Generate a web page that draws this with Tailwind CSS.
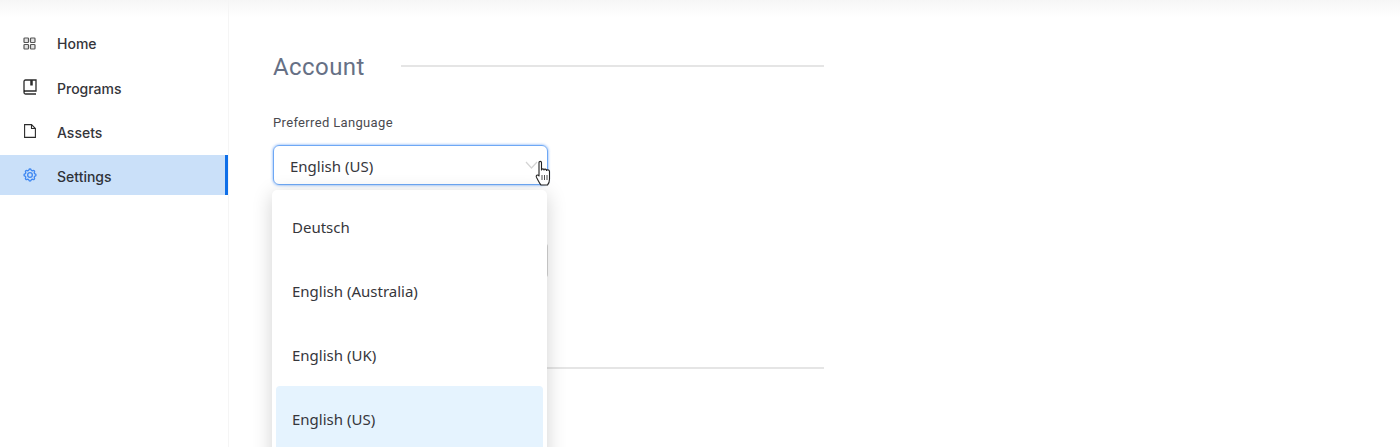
<!DOCTYPE html>
<html>
<head>
<meta charset="utf-8">
<script src="https://cdn.jsdelivr.net/npm/@tailwindcss/browser@4"></script>
</head>
<body class="bg-white overflow-hidden font-['Inter',sans-serif]">
<div class="relative w-[1400px] h-[447px] overflow-hidden flex flex-col">
  <div class="absolute top-0 left-0 right-0 h-[18px] bg-gradient-to-b from-[#f6f6f6] to-white"></div>
  <div class="flex flex-1 relative">
    <aside class="w-[229px] shrink-0 pt-[23px] border-r border-[#f5f5f5] flex flex-col gap-[4px]">
      <a class="h-[40px] flex items-center pl-[23px] gap-[21px] text-[14px] font-medium text-[#35353a]">
        <svg class="w-[13px] h-[13px]" viewBox="0 0 13 13" fill="#e4e4e4" stroke="#555" stroke-width="1.200"><rect x="1" y="1" width="4.500" height="4.500" rx="0.800"/><rect x="7.500" y="1" width="4.500" height="4.500" rx="0.800"/><rect x="1" y="7.500" width="4.500" height="4.500" rx="0.800"/><rect x="7.500" y="7.500" width="4.500" height="4.500" rx="0.800"/></svg>
        <span>Home</span></a>
      <a class="h-[40px] flex items-center pl-[23px] gap-[20px] text-[14px] font-medium text-[#35353a]">
        <svg class="w-[14px] h-[16px]" viewBox="0 0 14 16" fill="none" stroke="#2b2b2b" stroke-width="1.300"><path d="M1 13V2.500A1.500 1.500 0 0 1 2.500 1H13V12H2.500A1.500 1.500 0 0 0 1 13.500A1.500 1.500 0 0 0 2.500 15H13"/><path d="M8.500 1V6.500" stroke-width="2.500"/></svg>
        <span class="pt-[2px]">Programs</span></a>
      <a class="h-[40px] flex items-center pl-[24px] gap-[21px] text-[14px] font-medium text-[#35353a]">
        <svg class="w-[12px] h-[14px]" viewBox="0 0 12 14" fill="none" stroke="#2b2b2b" stroke-width="1.100"><path d="M0.600 0.600H7.500L11.400 4.500V13.400H0.600Z"/><path d="M7.500 0.600V4.500H11.400"/></svg>
        <span class="pt-[2px]">Assets</span></a>
      <a class="h-[40px] flex items-center pl-[22px] gap-[19px] text-[14px] font-medium text-[#2f3238] bg-[#cae0f9] border-r-[3px] border-[#0f6fe8]">
        <svg class="w-[16px] h-[16px]" viewBox="0 0 24 24" fill="none" stroke="#3f88f2" stroke-width="2" stroke-linecap="round" stroke-linejoin="round"><path d="M10.325 4.317c.426-1.756 2.924-1.756 3.350 0a1.724 1.724 0 0 0 2.573 1.066c1.543-.940 3.310.826 2.370 2.370a1.724 1.724 0 0 0 1.065 2.572c1.756.426 1.756 2.924 0 3.350a1.724 1.724 0 0 0-1.066 2.573c.940 1.543-.826 3.310-2.370 2.370a1.724 1.724 0 0 0-2.572 1.065c-.426 1.756-2.924 1.756-3.350 0a1.724 1.724 0 0 0-2.573-1.066c-1.543.940-3.310-.826-2.370-2.370a1.724 1.724 0 0 0-1.065-2.572c-1.756-.426-1.756-2.924 0-3.350a1.724 1.724 0 0 0 1.066-2.573c-.940-1.543.826-3.310 2.370-2.370 1 .608 2.296.070 2.572-1.065z"/><circle cx="12" cy="12" r="3.500"/></svg>
        <span class="pt-[2px]">Settings</span></a>
    </aside>
    <main class="w-[595px] pl-[44px] pr-0 pt-[52px]">
      <div class="flex items-start gap-[36px] h-[30px]">
        <h2 class="text-[24px] leading-[30px] text-[#667085] font-['Roboto',sans-serif] tracking-[0.42px]">Account</h2>
        <div class="flex-1 h-[2px] mt-[13px] bg-[#e5e5e5]"></div>
      </div>
      <label class="block mt-[32px] text-[13px] leading-[18px] text-[#4a4a4f] font-['Roboto',sans-serif] tracking-[0.34px]">Preferred Language</label>
      <div class="mt-[13px] w-[275px] h-[40px] rounded-[6px] border border-[#6ea8f5] shadow-[0_0_3px_rgba(70,140,240,0.8)] flex items-center justify-between pl-[16px] pr-[9px] text-[15px] text-[#36363b] font-['Noto_Sans',sans-serif]">
        <span class="pt-[2px]">English (US)</span>
        <svg class="w-[13px] h-[8px]" viewBox="0 0 13 8" fill="none" stroke="#d4d4d4" stroke-width="1.200"><path d="M1 1L6.500 7L12 1"/></svg>
      </div>
      <div class="mt-[58px] w-[275px] h-[35px] rounded-[4px] border-r border-[#d5d5d5]"></div>
      <div class="mt-[89px] h-[2px] bg-[#e5e5e5]"></div>
    </main>
    <div class="absolute left-[272px] top-[190px] w-[275px] h-[280px] bg-white rounded-[5px] shadow-[0_4px_20px_rgba(0,0,0,0.18)] px-[4px] pt-[4px] text-[15px] text-[#36363b] font-['Noto_Sans',sans-serif]">
      <div class="h-[64px] flex items-center px-[16px] pt-[2px]">Deutsch</div>
      <div class="h-[64px] flex items-center px-[16px] pt-[2px]">English (Australia)</div>
      <div class="h-[64px] flex items-center px-[16px] pt-[2px]">English (UK)</div>
      <div class="h-[64px] flex items-center px-[16px] pt-[2px] bg-[#e5f3fe] rounded-[4px]">English (US)</div>
    </div>
    <svg class="absolute left-[535px] top-[160px] w-[17px] h-[27px]" viewBox="0 0 17 27" fill="white" stroke="#222" stroke-width="1.100" stroke-linejoin="round"><path d="M4 2.500C4 1 6.500 1 6.500 2.500V10C6.500 8.500 9 8.500 9 10C9 8.800 11.500 8.800 11.500 10.500C11.500 9.500 14.500 9.500 14.500 11.500V19C14.500 22 13 24.500 12.500 25H6C4.500 23.500 3 20 1.500 17.500C0.500 15.500 2.500 14 4 16Z"/><path d="M7 15V20M9.500 15V20M12 15V20" stroke-width="0.800"/></svg>
  </div>
</div>
</body>
</html>
